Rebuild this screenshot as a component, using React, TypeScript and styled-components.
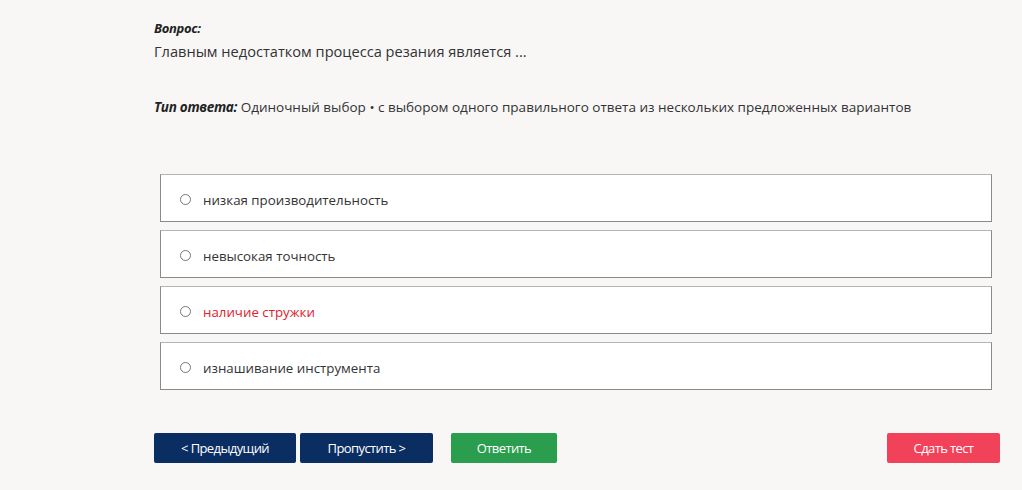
import React from "react";
import styled, { createGlobalStyle } from "styled-components";

const Global = createGlobalStyle`
  html, body { margin: 0; padding: 0; background: #f8f7f6; }
  body { font-family: "Open Sans", "Noto Sans", sans-serif; color: #333; }
`;

const Page = styled.div`
  padding: 19px 22px 0 154px;
  display: flex;
  flex-direction: column;
`;

const Label = styled.div`
  font-size: 13px;
  font-weight: 700;
  font-style: italic;
  color: #222;
  line-height: 18px;
  letter-spacing: -0.3px;
`;

const Question = styled.div`
  font-size: 14.6px;
  line-height: 22px;
  margin-top: 3px;
  color: #333;
`;

const TypeLine = styled.div`
  margin-top: 35px;
  font-size: 13.5px;
  line-height: 20px;
  color: #333;
  b { font-weight: 700; font-style: italic; color: #222; letter-spacing: -0.3px; }
`;

const Options = styled.div`
  margin: 57px 8px 0 6px;
  display: flex;
  flex-direction: column;
  gap: 8px;
`;

const Option = styled.label<{ $red?: boolean }>`
  height: 48px;
  box-sizing: border-box;
  background: #fff;
  border: 1px solid #8a8a8a;
  border-top-color: #b5b5b5;
  display: flex;
  align-items: center;
  padding: 3px 0 0 19px;
  font-size: 13.3px;
  color: ${(p) => (p.$red ? "#e0202e" : "#333")};
  cursor: pointer;
`;

const Radio = styled.span`
  width: 9px;
  height: 9px;
  border-radius: 50%;
  border: 1px solid #777;
  margin-right: 12px;
  flex-shrink: 0;
  background: #fff;
`;

const Buttons = styled.div`
  margin-top: 43px;
  display: flex;
  align-items: center;
`;

const Btn = styled.button<{ $bg: string; $w: number; $ml?: number }>`
  width: ${(p) => p.$w}px;
  height: 30px;
  margin-left: ${(p) => p.$ml ?? 0}px;
  background: ${(p) => p.$bg};
  color: #fff;
  border: none;
  border-radius: 2px;
  font-family: "Open Sans", "Noto Sans", sans-serif;
  font-size: 13px;
  letter-spacing: -0.6px;
  cursor: pointer;
  padding: 0;
`;

const Spacer = styled.div`
  flex: 1;
`;

const options = [
  { t: "низкая производительность" },
  { t: "невысокая точность" },
  { t: "наличие стружки", red: true },
  { t: "изнашивание инструмента" },
];

export default function App() {
  return (
    <>
      <Global />
      <Page>
        <Label>Вопрос:</Label>
        <Question>Главным недостатком процесса резания является ...</Question>
        <TypeLine>
          <b>Тип ответа:</b> Одиночный выбор • с выбором одного правильного ответа из нескольких предложенных вариантов
        </TypeLine>
        <Options>
          {options.map((o) => (
            <Option key={o.t} $red={o.red}>
              <Radio />
              {o.t}
            </Option>
          ))}
        </Options>
        <Buttons>
          <Btn $bg="#0b2e62" $w={142}>&lt; Предыдущий</Btn>
          <Btn $bg="#0b2e62" $w={133} $ml={4}>Пропустить &gt;</Btn>
          <Btn $bg="#2a9d4f" $w={106} $ml={18}>Ответить</Btn>
          <Spacer />
          <Btn $bg="#f2425a" $w={113} $ml={0}>Сдать тест</Btn>
        </Buttons>
      </Page>
    </>
  );
}
